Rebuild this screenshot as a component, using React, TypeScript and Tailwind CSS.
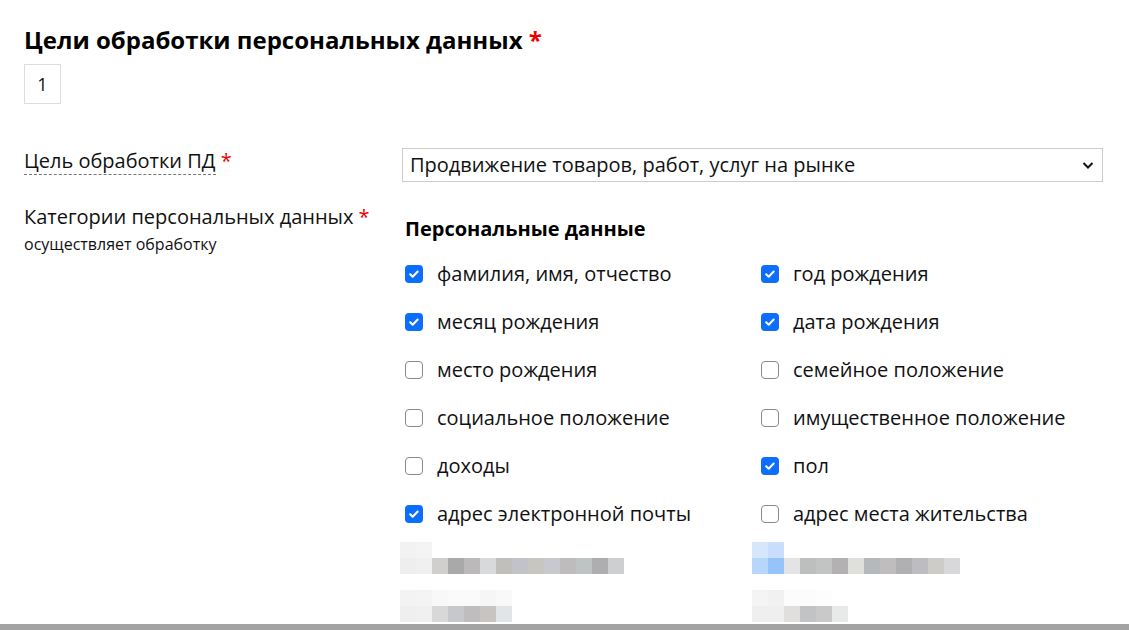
import React from "react";

type Item = { label: string; checked: boolean };

const left: Item[] = [
  { label: "фамилия, имя, отчество", checked: true },
  { label: "месяц рождения", checked: true },
  { label: "место рождения", checked: false },
  { label: "социальное положение", checked: false },
  { label: "доходы", checked: false },
  { label: "адрес электронной почты", checked: true },
];

const right: Item[] = [
  { label: "год рождения", checked: true },
  { label: "дата рождения", checked: true },
  { label: "семейное положение", checked: false },
  { label: "имущественное положение", checked: false },
  { label: "пол", checked: true },
  { label: "адрес места жительства", checked: false },
];

// blurred (pixelated) rows below the list, 16px blocks
const blurLeft: string[][] = [
  ["#f2f2f2", "#f4f4f4"],
  ["#eeeeee", "#f0f0f0", "#d0cfcd", "#a9a9a9", "#bbb9ba", "#d8d9db", "#c0bfbb", "#c2c3c8", "#c8c6c1", "#c8c9ce", "#bebcbd", "#bec3c4", "#aeaeb0", "#cdcfd1"],
  ["#ffffff"],
  ["#f3f3f3", "#f4f4f4", "#f8f8f8", "#fafafa", "#fafafa", "#f6f6f6", "#f9f9f9"],
  ["#efefef", "#f0f0f0", "#d8d8d8", "#c6c8cb", "#bfbdbe", "#c8c4c1", "#e1e5e8"],
];

const blurRight: string[][] = [
  ["#d6e7fd", "#c9defc"],
  ["#b6d6fc", "#97c3fc", "#e4e3e5", "#bdbfbe", "#c2c4c3", "#b3b1b2", "#dfdfdb", "#b5b9bc", "#c0bdbe", "#b0b0b2", "#bdbdc1", "#cdccc8", "#d8d8da"],
  ["#ffffff"],
  ["#f4f4f4", "#f1f1f1", "#fcfcfc", "#fcfcfc", "#fdfdfd"],
  ["#efefef", "#efefef", "#e0dfdd", "#c2c3c5", "#c8c9c8", "#e8e9e9"],
];

function Check({ checked }: { checked: boolean }) {
  if (checked) {
    return (
      <span className="flex h-[18px] w-[18px] shrink-0 items-center justify-center rounded-[4px] bg-[#0d6efd]">
        <svg width="12" height="12" viewBox="0 0 12 12" fill="none">
          <path d="M2.2 6.3l2.5 2.5 5-5.3" stroke="white" strokeWidth="2" strokeLinecap="round" strokeLinejoin="round" />
        </svg>
      </span>
    );
  }
  return <span className="h-[18px] w-[18px] shrink-0 rounded-[4px] border border-[#8a8a8a] bg-white" />;
}

function CheckRow({ item }: { item: Item }) {
  return (
    <div className="flex h-12 items-center">
      <Check checked={item.checked} />
      <span className="ml-[14px] text-[20px] text-[#111]">{item.label}</span>
    </div>
  );
}

function Blur({ rows }: { rows: string[][] }) {
  return (
    <div className="flex flex-col">
      {rows.map((r, i) => (
        <div key={i} className="flex h-4">
          {r.map((c, j) => (
            <div key={j} className="h-4 w-4" style={{ background: c }} />
          ))}
        </div>
      ))}
    </div>
  );
}

export default function App() {
  return (
    <div className="relative h-[630px] w-[1129px] overflow-hidden bg-white font-['Open_Sans',sans-serif] text-[#111]">
      <div className="pl-6 pr-[26px] pt-[25px]">
        <h2 className="text-[24px] font-bold leading-[30px] text-black">
          Цели обработки персональных данных <span className="text-[#e00]">*</span>
        </h2>
        <div className="mt-[9px] flex h-[40px] w-[37px] items-center justify-center border border-[#dddddd] text-[18px]">1</div>

        <div className="mt-[44px] flex">
          <div className="w-[378px] shrink-0">
            <div className="text-[20px] leading-[26px]">
              <span className="border-b border-dashed border-[#777]">Цель обработки ПД</span>{" "}
              <span className="text-[#e00]">*</span>
            </div>
          </div>
          <div className="relative h-[34px] flex-1 border border-[#cccccc] bg-white">
            <div className="pl-[7px] text-[20px] leading-[32px]">Продвижение товаров, работ, услуг на рынке</div>
            <svg className="absolute right-[8px] top-[11px]" width="12" height="10" viewBox="0 0 12 10" fill="none">
              <path d="M1.5 3l4.5 4.5L10.5 3" stroke="#111" strokeWidth="2" />
            </svg>
          </div>
        </div>

        <div className="mt-[22px] flex">
          <div className="w-[381px] shrink-0">
            <div className="text-[20px] leading-[26px]">
              Категории персональных данных <span className="text-[#e00]">*</span>
            </div>
            <div className="mt-[3px] text-[16px] leading-[22px]">осуществляет обработку</div>
          </div>
          <div className="flex-1">
            <div className="mt-[12px] text-[20px] font-bold leading-[26px] text-black">Персональные данные</div>
            <div className="mt-[8px] grid grid-cols-[356px_1fr]">
              <div className="flex flex-col">
                {left.map((it) => (
                  <CheckRow key={it.label} item={it} />
                ))}
                <div className="-ml-[5px] mt-[4px]">
                  <Blur rows={blurLeft} />
                </div>
              </div>
              <div className="flex flex-col">
                {right.map((it) => (
                  <CheckRow key={it.label} item={it} />
                ))}
                <div className="-ml-[9px] mt-[4px]">
                  <Blur rows={blurRight} />
                </div>
              </div>
            </div>
          </div>
        </div>
      </div>
      <div className="absolute bottom-0 left-0 h-[6px] w-full bg-[#a3a3a3]" />
    </div>
  );
}
